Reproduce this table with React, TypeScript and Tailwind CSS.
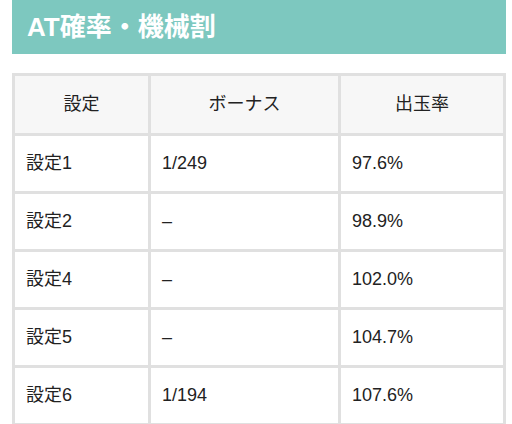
const rows = [
  { set: "設定1", bonus: "1/249", rate: "97.6%" },
  { set: "設定2", bonus: "–", rate: "98.9%" },
  { set: "設定4", bonus: "–", rate: "102.0%" },
  { set: "設定5", bonus: "–", rate: "104.7%" },
  { set: "設定6", bonus: "1/194", rate: "107.6%" },
];

const font = { fontFamily: '"Liberation Sans", "Noto Sans CJK JP", sans-serif' };

export default function App() {
  return (
    <div className="w-[512px] h-[424px] overflow-hidden bg-white pl-[12px] pr-[6px]" style={font}>
      <div className="h-[54px] bg-[#7dc8bf] flex items-center pl-[15px]">
        <h2 className="text-white font-bold text-[26px] leading-none">AT確率・機械割</h2>
      </div>
      <table className="mt-[19px] w-full border-collapse text-[18px] text-[#222]">
        <thead>
          <tr className="bg-[#f7f7f7] h-[60px]">
            <th className="w-[136px] border-[3px] border-[#e0e0e0] font-normal text-center">設定</th>
            <th className="w-[190px] border-[3px] border-[#e0e0e0] font-normal text-center">ボーナス</th>
            <th className="border-[3px] border-[#e0e0e0] font-normal text-center">出玉率</th>
          </tr>
        </thead>
        <tbody>
          {rows.map((r) => (
            <tr key={r.set} className="h-[58px]">
              <td className="border-[3px] border-[#e0e0e0] pl-[11px]">{r.set}</td>
              <td className="border-[3px] border-[#e0e0e0] pl-[11px]">{r.bonus}</td>
              <td className="border-[3px] border-[#e0e0e0] pl-[11px]">{r.rate}</td>
            </tr>
          ))}
        </tbody>
      </table>
    </div>
  );
}
